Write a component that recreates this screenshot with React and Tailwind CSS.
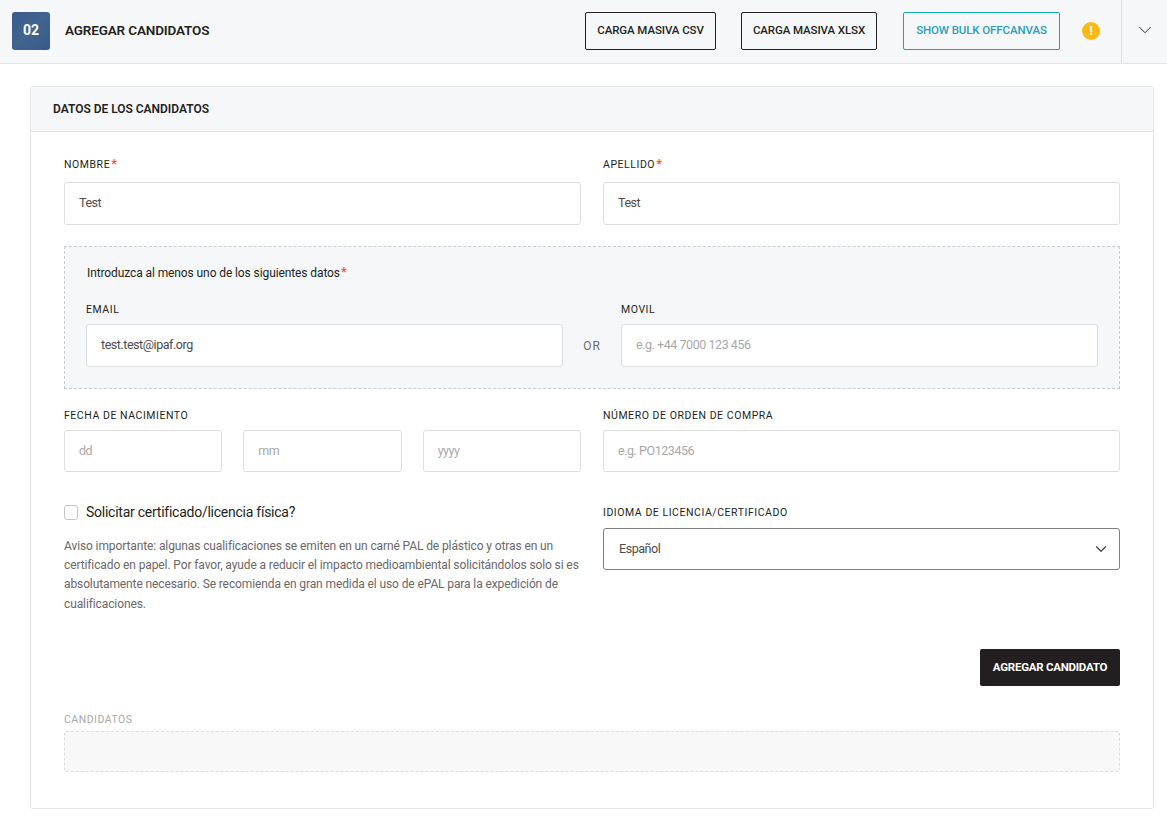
import React from "react";
import { ChevronDown } from "lucide-react";

function Asterisk() {
  return <span className="-mt-1 ml-px text-[13px] font-medium leading-none tracking-normal text-[#f4511e]">*</span>;
}

function FieldLabel({ children, required, className = "" }) {
  return (
    <label className={`flex h-[18px] items-center text-[10.5px] leading-[18px] tracking-[0.55px] text-[#231f20] ${className}`}>
      {children}
      {required ? <Asterisk /> : null}
    </label>
  );
}

function TextBox({ value, placeholder, className = "h-[43px]" }) {
  return (
    <div className={`flex items-center rounded-[3px] border border-[#dcdee0] bg-white px-[14px] text-[12.5px] tracking-[-0.45px] ${value ? "text-[#4f4a4b]" : "text-[#a9a9a9]"} ${className}`}>
      {value || placeholder}
    </div>
  );
}

function HeaderButton({ children, className }) {
  return (
    <button className={`mb-[2px] flex h-[38px] items-center justify-center whitespace-nowrap rounded-[2px] border bg-transparent text-[11.5px] font-medium tracking-[-0.1px] ${className}`}>
      {children}
    </button>
  );
}

export default function App() {
  return (
    <div className="min-h-[821px] bg-white font-['Roboto',sans-serif]">
      <header className="flex h-[64px] items-center border-b border-[#e3e5e8] bg-[#f6f7f9]">
        <div className="mb-[2px] ml-3 flex h-[38px] w-[38px] items-center justify-center rounded-[3px] bg-[linear-gradient(135deg,#375a8a_0%,#42648f_50%,#375a8a_100%)] text-[14px] font-bold text-white">
          02
        </div>
        <h1 className="mb-[3px] ml-[15px] text-[13.5px] font-semibold tracking-[-0.15px] text-[#231f20]">AGREGAR CANDIDATOS</h1>
        <div className="ml-auto flex items-center">
          <HeaderButton className="w-[131px] border-[#231f20] text-[#231f20]">CARGA MASIVA CSV</HeaderButton>
          <HeaderButton className="ml-[25px] w-[136px] border-[#231f20] text-[#231f20]">CARGA MASIVA XLSX</HeaderButton>
          <HeaderButton className="ml-[26px] w-[157px] border-[#10a5c0] text-[#2a9fba]">SHOW BULK OFFCANVAS</HeaderButton>
          <div className="mb-px ml-[22px] flex h-[18px] w-[18px] items-center justify-center rounded-full bg-[#fdb913] text-[12px] font-bold leading-none text-white">!</div>
          <div className="ml-[21px] flex h-[63px] w-[46px] items-center justify-center border-l border-[#dcdee0]">
            <ChevronDown size={22} strokeWidth={1} className="mb-[4px] text-[#231f20]" />
          </div>
        </div>
      </header>

      <section className="mx-[30px] mb-[13px] mt-[22px] w-[1124px] rounded-[3px] border border-[#e3e5e8]">
        <div className="flex h-[45px] items-center border-b border-[#e3e5e8] bg-[#f6f7f9] px-[22px] text-[12px] font-semibold tracking-[-0.02px] text-[#231f20]">
          DATOS DE LOS CANDIDATOS
        </div>

        <div className="px-[33px] pt-[24px]">
          <div className="grid grid-cols-2 gap-x-[22px]">
            <div>
              <FieldLabel required>NOMBRE</FieldLabel>
              <TextBox value="Test" className="mt-[8px] h-[43px]" />
            </div>
            <div>
              <FieldLabel required>APELLIDO</FieldLabel>
              <TextBox value="Test" className="mt-[8px] h-[43px]" />
            </div>
          </div>

          <div className="mt-[21px] h-[143px] border border-dashed border-[#c9ccd0] bg-[#f6f7f9] px-[21px] pt-[17px]">
            <p className="flex h-[18px] items-center pl-px text-[12px] tracking-[-0.1px] text-[#231f20]">
              Introduzca al menos uno de los siguientes datos
              <Asterisk />
            </p>
            <div className="mt-[19px] flex items-end">
              <div className="w-[477px]">
                <FieldLabel>EMAIL</FieldLabel>
                <TextBox value="test.test@ipaf.org" className="mt-[5px] h-[43px]" />
              </div>
              <div className="flex h-[43px] w-[58px] items-center justify-center text-[12px] tracking-[0.08em] text-[#6f6b6c]">OR</div>
              <div className="w-[477px]">
                <FieldLabel>MOVIL</FieldLabel>
                <TextBox placeholder="e.g. +44 7000 123 456" className="mt-[5px] h-[43px]" />
              </div>
            </div>
          </div>

          <div className="mt-[18px] grid grid-cols-2 gap-x-[22px]">
            <div>
              <FieldLabel>FECHA DE NACIMIENTO</FieldLabel>
              <div className="mt-[5px] grid grid-cols-3 gap-x-[21px]">
                <TextBox placeholder="dd" className="h-[42px]" />
                <TextBox placeholder="mm" className="h-[42px]" />
                <TextBox placeholder="yyyy" className="h-[42px]" />
              </div>
            </div>
            <div>
              <FieldLabel>NÚMERO DE ORDEN DE COMPRA</FieldLabel>
              <TextBox placeholder="e.g. PO123456" className="mt-[5px] h-[42px]" />
            </div>
          </div>

          <div className="mt-[31px] grid grid-cols-2 gap-x-[22px]">
            <div>
              <label className="flex h-[18px] items-center text-[14px] tracking-[-0.25px] text-[#231f20]">
                <span className="mr-2 h-[15px] w-[14px] rounded-[3px] border border-[#c4c6c9] bg-white" />
                Solicitar certificado/licencia física?
              </label>
              <p className="mt-[16px] text-[12px] leading-[19.2px] tracking-[-0.11px] text-[#6b6768]">
                Aviso importante: algunas cualificaciones se emiten en un carné PAL de plástico y otras en un certificado en papel. Por favor, ayude a reducir el impacto medioambiental solicitándolos solo si es absolutamente necesario. Se recomienda en gran medida el uso de ePAL para la expedición de cualificaciones.
              </p>
            </div>
            <div>
              <FieldLabel className="mt-px">IDIOMA DE LICENCIA/CERTIFICADO</FieldLabel>
              <div className="mt-[6px] flex h-[42px] items-center justify-between rounded-[3px] border border-[#7f7f7f] bg-white pl-[15px] pr-[9px] text-[12.5px] tracking-[-0.45px] text-[#4f4a4b]">
                Español
                <ChevronDown size={18} strokeWidth={1.8} className="text-[#4f4a4b]" />
              </div>
            </div>
          </div>

          <div className="mt-[35px] flex justify-end">
            <button className="h-[37px] w-[140px] rounded-[2px] bg-[#231f20] text-[11.5px] font-bold tracking-[-0.25px] text-white">AGREGAR CANDIDATO</button>
          </div>

          <div className="mt-[25px] text-[10.5px] leading-[18px] tracking-[0.5px] text-[#a9a9a9]">CANDIDATOS</div>
          <div className="mb-[36px] mt-[2px] h-[41px] rounded-[2px] border border-dashed border-[#dcdee0] bg-[#f8f8f8]" />
        </div>
      </section>
    </div>
  );
}
